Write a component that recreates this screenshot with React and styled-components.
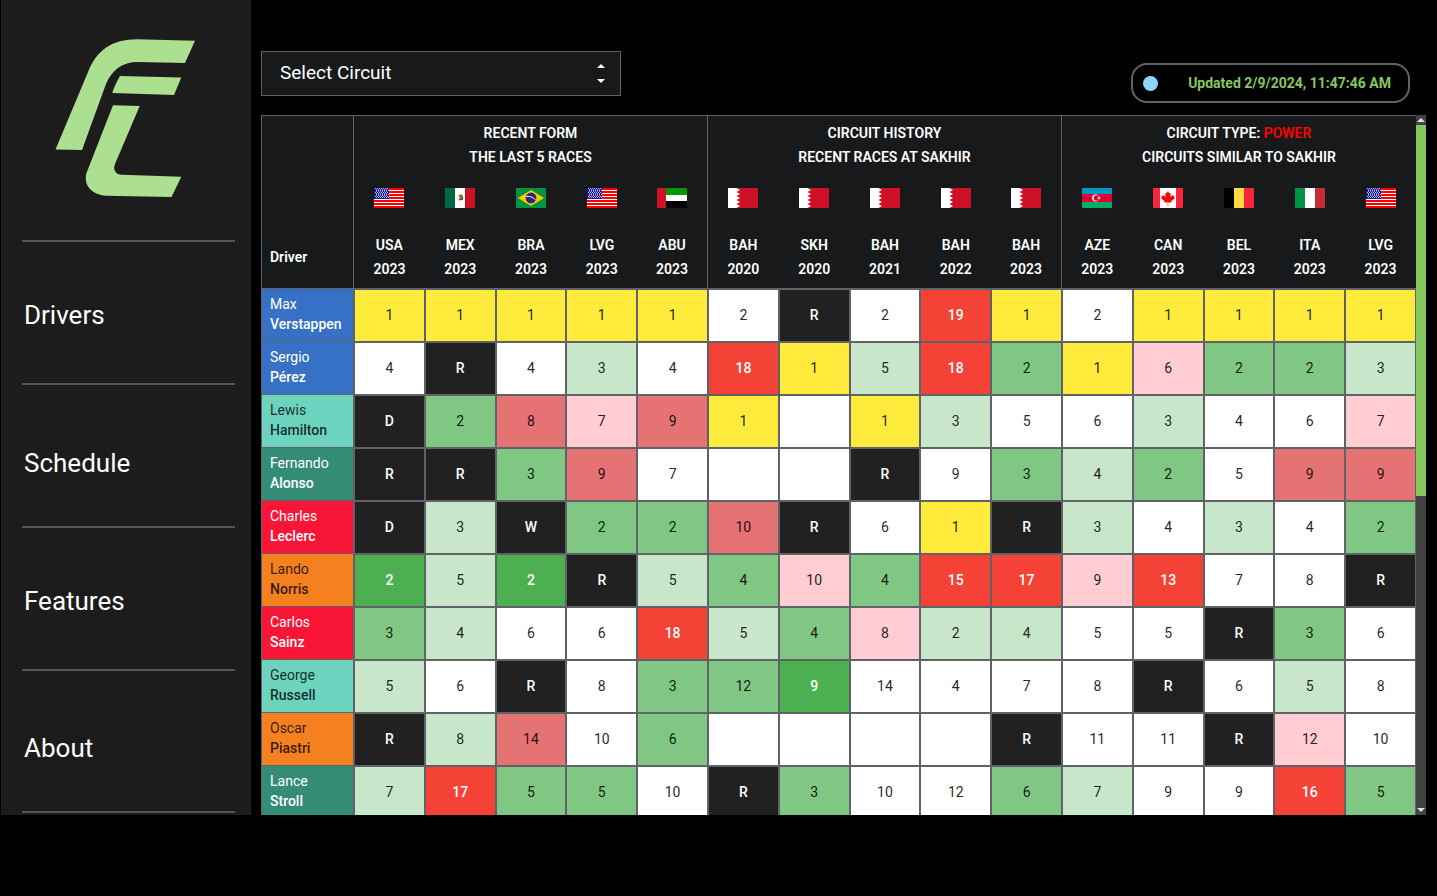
import React, { useRef, useState } from "react";
import styled, { createGlobalStyle } from "styled-components";

const color = {
  panel: "#1c1c1c",
  surface: "#17191a",
  line: "#5f6368",
  divider: "#555555",
  logo: "#acdf8f",
  accent: "#86c65f",
  track: "#424242",
};

const GlobalStyle = createGlobalStyle`
  * { box-sizing: border-box; }
  body {
    margin: 0;
    background: #000;
    color: #fff;
    font-family: Roboto, "Liberation Sans", sans-serif;
  }
  button, select { font-family: inherit; }
`;

const Page = styled.div`
  display: flex;
  height: 91vh;
  padding-left: 1px;
`;

const Sidebar = styled.aside`
  flex: 0 0 250px;
  display: flex;
  flex-direction: column;
  padding: 0 16px 2px 21px;
  background: ${color.panel};
`;

const LogoLink = styled.a`
  display: flex;
  flex: 0 0 242px;
  padding: 38px 0 0 32px;
  border-bottom: 2px solid ${color.divider};
`;

const Nav = styled.nav`
  display: grid;
  flex: 1;
  grid-template-rows: repeat(4, 1fr);
`;

const NavLink = styled.a`
  display: flex;
  align-items: center;
  padding: ${(p) => (p.$low ? "15px" : "5px")} 0 0 2px;
  border-bottom: 2px solid ${color.divider};
  color: #fff;
  font-size: 26px;
  line-height: 32px;
  text-decoration: none;
`;

const Main = styled.main`
  display: flex;
  flex: 1;
  flex-direction: column;
  min-width: 0;
  padding: 51px 11px 0 10px;
`;

const Toolbar = styled.header`
  display: flex;
  align-items: flex-start;
  justify-content: space-between;
  flex: 0 0 64px;
  padding-right: 16px;
`;

const SelectBox = styled.label`
  display: flex;
  align-items: center;
  width: 360px;
  height: 45px;
  padding: 0 14px 2px 0;
  border: 1px solid ${color.line};
  background: ${color.surface};
`;

const Select = styled.select`
  flex: 1;
  height: 41px;
  padding: 0 0 0 18px;
  border: 0;
  outline: 0;
  appearance: none;
  background: transparent;
  color: #fff;
  font-size: 19px;
`;

const Badge = styled.div`
  display: flex;
  align-items: center;
  justify-content: space-between;
  width: 279px;
  height: 40px;
  margin-top: 12px;
  padding: 0 17px 0 10px;
  border: 2px solid ${color.line};
  border-radius: 16px;
  color: ${color.accent};
  font-size: 14px;
  font-weight: 700;
  line-height: 20px;
`;

const Dot = styled.span`
  width: 15px;
  height: 15px;
  border-radius: 50%;
  background: #90d5ff;
`;

const Board = styled.section`
  display: flex;
  flex: 1;
  min-height: 0;
`;

const Viewport = styled.div`
  flex: 1;
  min-width: 0;
  overflow-y: auto;
  scrollbar-width: none;
`;

const Table = styled.table`
  width: 100%;
  table-layout: fixed;
  border-collapse: separate;
  border-spacing: 0;
  font-size: 14px;
`;

const DriverCol = styled.col`
  width: 93px;
`;

const HeadCell = styled.th`
  padding: 0;
  background: ${color.surface};
  font-weight: 600;
  line-height: 24px;
`;

const CornerCell = styled(HeadCell)`
  padding: 0 8px 19px;
  border: 1px solid ${color.line};
  text-align: left;
  vertical-align: bottom;
`;

const GroupCell = styled(HeadCell)`
  height: 60px;
  padding-top: 5px;
  border-top: 1px solid ${color.line};
  border-right: ${(p) => (p.$last ? 0 : 1)}px solid ${color.line};
  vertical-align: top;
`;

const RaceCell = styled(HeadCell)`
  height: 114px;
  padding-top: 13px;
  border-bottom: 1px solid ${color.line};
  border-right: ${(p) => (p.$edge ? 1 : 0)}px solid ${color.line};
  vertical-align: top;
`;

const RaceLabel = styled.div`
  margin-top: 25px;
`;

const FlagSvg = styled.svg`
  display: block;
  width: 30px;
  height: 20px;
  margin: 0 auto;
`;

const Power = styled.span`
  color: #f00;
`;

const teams = {
  redbull: ["#3671c6", "#fff"],
  mercedes: ["#6cd3bf", "rgba(0,0,0,.8)"],
  aston: ["#358c75", "#fff"],
  ferrari: ["#f91536", "#fff"],
  mclaren: ["#f58020", "rgba(0,0,0,.8)"],
};

const DriverCell = styled.th`
  height: 53px;
  padding: 0 8px 2px;
  border: solid ${color.line};
  border-width: 0 1px 1px;
  background: ${(p) => teams[p.$team][0]};
  color: ${(p) => teams[p.$team][1]};
  font-weight: 400;
  line-height: 20px;
  text-align: left;
`;

const LastName = styled.div`
  font-weight: 500;
`;

const tones = {
  y: "#ffeb3b",
  w: "#ffffff",
  k: "#212121",
  r: "#f44336",
  s: "#e57373",
  p: "#ffcdd2",
  l: "#c8e6c9",
  g: "#81c784",
  G: "#4caf50",
};

const ResultCell = styled.td`
  height: 53px;
  padding: 0 0 2px;
  border: 1px solid ${color.line};
  background: ${(p) => tones[p.$tone]};
  color: ${(p) => ("krG".includes(p.$tone) ? "#fff" : "rgba(0,0,0,.87)")};
  font-weight: ${(p) => ("krG".includes(p.$tone) ? 500 : 400)};
  line-height: 20px;
  text-align: center;
`;

const Scrollbar = styled.div`
  display: flex;
  flex: 0 0 10px;
  flex-direction: column;
  background: ${color.track};
`;

const Track = styled.div`
  flex: 1;
`;

const Thumb = styled.div`
  height: 54.5%;
  background: ${color.accent};
`;

const ArrowButton = styled.button`
  display: flex;
  align-items: center;
  justify-content: center;
  height: 10px;
  padding: 0;
  border: 0;
  background: transparent;
`;

const stripes = [1, 3, 5, 7, 9, 11];

const flagArt = {
  us: (
    <>
      <path fill="#fff" d="M0 0h30v20H0z" />
      {[0, 3, 6, 9, 12, 15, 18].map((y) => (
        <path key={y} fill="#f00" d={`M0 ${y}h30v2H0z`} />
      ))}
      <path fill="#1a1a8c" d="M0 0h15v11H0z" />
      {stripes.map((y, row) => (
        <path key={y} stroke="#b8b8e8" strokeDasharray="1 1" d={`M${1 + (row % 2)} ${y - 0.5 + (row > 4 ? -1 : 0)}h13`} />
      ))}
      {[2, 4, 6, 8].map((y) => (
        <path key={y} stroke="#8a8ad0" strokeDasharray="1 1" d={`M2 ${y - 0.5}h12`} />
      ))}
    </>
  ),
  mx: (
    <>
      <path fill="#006847" d="M0 0h10v20H0z" />
      <path fill="#fff" d="M10 0h10v20H10z" />
      <path fill="#ce1126" d="M20 0h10v20H20z" />
      <path fill="none" stroke="#b9c9ab" strokeWidth=".8" d="M12 9c0 5 5.500 5 6.500 0" />
      <path fill="#8c6239" d="M13 8l3-2 2 2v3l-2 1-2-1 1-2z" />
      <path fill="#4d5a45" d="M14 11h4v1h-4z" />
    </>
  ),
  br: (
    <>
      <path fill="#009440" d="M0 0h30v20H0z" />
      <path fill="#ffcb00" d="M15 2l13 8-13 8L2 10z" />
      <circle cx="15" cy="10" r="5.4" fill="#302681" />
      <path fill="none" stroke="#fff" strokeWidth=".9" d="M10 8.500c4-.6 7 .6 9.800 3.600" />
    </>
  ),
  ae: (
    <>
      <path fill="#009a00" d="M0 0h30v7H0z" />
      <path fill="#fff" d="M0 7h30v6H0z" />
      <path fill="#000" d="M0 13h30v7H0z" />
      <path fill="#ce1126" d="M0 0h9v20H0z" />
    </>
  ),
  bh: (
    <>
      <path fill="#ce1126" d="M0 0h30v20H0z" />
      <path fill="#fff" d="M0 0h8.500l3.500 2-3.500 2 3.500 2-3.500 2 3.500 2-3.500 2 3.500 2-3.500 2 3.500 2-3.500 2H0z" />
    </>
  ),
  az: (
    <>
      <path fill="#0098c3" d="M0 0h30v6H0z" />
      <path fill="#e00034" d="M0 6h30v8H0z" />
      <path fill="#00ae65" d="M0 14h30v6H0z" />
      <circle cx="13.500" cy="10" r="3.400" fill="#fff" />
      <circle cx="14.500" cy="10" r="2.700" fill="#e00034" />
      <path fill="#fff" d="M17 8l.6 1.400L19 10l-1.400.6L17 12l-.6-1.400L15 10l1.400-.6z" />
    </>
  ),
  ca: (
    <>
      <path fill="#fff" d="M0 0h30v20H0z" />
      <path fill="#f7263a" d="M0 0h7v20H0zM23 0h7v20h-7z" />
      <path fill="#f00" d="M15 3l1.500 2.600 1.300-.7-.5 4 2-2 .4 1.100 2-.3-.7 2 .9.5-3.900 3.300.4 1.200-3.200-.5V18h-.5v-3.800l-3.200.5.4-1.200L8 10.200l.9-.5-.7-2 2 .3.500-1.100 1.900 2-.5-4 1.300.7z" />
    </>
  ),
  be: (
    <>
      <path fill="#000" d="M0 0h10v20H0z" />
      <path fill="#fdda44" d="M10 0h10v20H10z" />
      <path fill="#f7263a" d="M20 0h10v20H20z" />
    </>
  ),
  it: (
    <>
      <path fill="#009246" d="M0 0h10v20H0z" />
      <path fill="#fff" d="M10 0h10v20H10z" />
      <path fill="#c42b37" d="M20 0h10v20H20z" />
    </>
  ),
};

const groups = [
  { title: "RECENT FORM", sub: "THE LAST 5 RACES" },
  { title: "CIRCUIT HISTORY", sub: "RECENT RACES AT SAKHIR" },
  { title: "CIRCUIT TYPE: ", power: "POWER", sub: "CIRCUITS SIMILAR TO SAKHIR" },
];

const races = [
  ["us", "USA", 2023], ["mx", "MEX", 2023], ["br", "BRA", 2023], ["us", "LVG", 2023], ["ae", "ABU", 2023],
  ["bh", "BAH", 2020], ["bh", "SKH", 2020], ["bh", "BAH", 2021], ["bh", "BAH", 2022], ["bh", "BAH", 2023],
  ["az", "AZE", 2023], ["ca", "CAN", 2023], ["be", "BEL", 2023], ["it", "ITA", 2023], ["us", "LVG", 2023],
];

// Each result is a tone key followed by the finishing position or status.
const drivers = [
  ["Max", "Verstappen", "redbull", "y1 y1 y1 y1 y1 w2 kR w2 r19 y1 w2 y1 y1 y1 y1"],
  ["Sergio", "Pérez", "redbull", "w4 kR w4 l3 w4 r18 y1 l5 r18 g2 y1 p6 g2 g2 l3"],
  ["Lewis", "Hamilton", "mercedes", "kD g2 s8 p7 s9 y1 w y1 l3 w5 w6 l3 w4 w6 p7"],
  ["Fernando", "Alonso", "aston", "kR kR g3 s9 w7 w w kR w9 g3 l4 g2 w5 s9 s9"],
  ["Charles", "Leclerc", "ferrari", "kD l3 kW g2 g2 s10 kR w6 y1 kR l3 w4 l3 w4 g2"],
  ["Lando", "Norris", "mclaren", "G2 l5 G2 kR l5 g4 p10 g4 r15 r17 p9 r13 w7 w8 kR"],
  ["Carlos", "Sainz", "ferrari", "g3 l4 w6 w6 r18 l5 g4 p8 l2 l4 w5 w5 kR g3 w6"],
  ["George", "Russell", "mercedes", "l5 w6 kR w8 g3 g12 G9 w14 w4 w7 w8 kR w6 l5 w8"],
  ["Oscar", "Piastri", "mclaren", "kR l8 s14 w10 g6 w w w w kR w11 w11 kR p12 w10"],
  ["Lance", "Stroll", "aston", "l7 r17 g5 g5 w10 kR g3 w10 w12 g6 l7 w9 w9 r16 g5"],
];

const Logo = () => (
  <svg width="142" height="162" viewBox="54 38 142 162" fill={color.logo} role="img" aria-label="Home">
    <path d="M55.500 149.500L88 72C97 50 112 39.300 137 39.300L195 40.700L185 63L138 62C122 62 112 70 106 84L82 150Z" />
    <path d="M120 76L181.300 77.500L174 95L112.300 93C114 87 117 81 120 76Z" />
    <path d="M113 105.300L139.700 106L115 164C112.500 170 116 174.700 122 174.800L181.300 176.700L171.500 197L106 195.700C92 195 83 185 86.500 173Z" />
  </svg>
);

const Arrow = ({ down }) => (
  <svg width="8" height="4" viewBox="0 0 8 4" fill="#e0e0e0">
    <path d={down ? "M0 0h8L4 4z" : "M0 4h8L4 0z"} />
  </svg>
);

export default function App() {
  const view = useRef(null);
  const [top, setTop] = useState(0);
  const scroll = (amount) => view.current.scrollBy({ top: amount });

  return (
    <>
      <GlobalStyle />
      <Page>
        <Sidebar>
          <LogoLink href="#home"><Logo /></LogoLink>
          <Nav>
            <NavLink href="#drivers">Drivers</NavLink>
            <NavLink href="#schedule" $low>Schedule</NavLink>
            <NavLink href="#features">Features</NavLink>
            <NavLink href="#about" $low>About</NavLink>
          </Nav>
        </Sidebar>
        <Main>
          <Toolbar>
            <SelectBox>
              <Select aria-label="Circuit" defaultValue="">
                <option value="">Select Circuit</option>
              </Select>
              <svg width="10" height="20" viewBox="0 0 10 20" fill="#fff">
                <path d="M1 5L5 1l4 4zM1 16h8l-4 4z" />
              </svg>
            </SelectBox>
            <Badge>
              <Dot />
              <span>Updated 2/9/2024, 11:47:46 AM</span>
            </Badge>
          </Toolbar>
          <Board>
            <Viewport ref={view} onScroll={(e) => setTop(e.currentTarget.scrollTop)}>
              <Table>
                <colgroup>
                  <DriverCol />
                  {races.map((_, i) => <col key={i} />)}
                </colgroup>
                <thead>
                  <tr>
                    <CornerCell scope="col" rowSpan={2}>Driver</CornerCell>
                    {groups.map((g, i) => (
                      <GroupCell key={g.sub} scope="colgroup" colSpan={5} $last={i === 2}>
                        <div>{g.title}{g.power && <Power>{g.power}</Power>}</div>
                        <div>{g.sub}</div>
                      </GroupCell>
                    ))}
                  </tr>
                  <tr>
                    {races.map(([flag, code, year], i) => (
                      <RaceCell key={i} scope="col" $edge={i === 4 || i === 9}>
                        <FlagSvg viewBox="0 0 30 20" aria-hidden="true">{flagArt[flag]}</FlagSvg>
                        <RaceLabel>{code}<br />{year}</RaceLabel>
                      </RaceCell>
                    ))}
                  </tr>
                </thead>
                <tbody>
                  {drivers.map(([first, last, team, results]) => (
                    <tr key={last}>
                      <DriverCell scope="row" $team={team}>
                        <div>{first}</div>
                        <LastName>{last}</LastName>
                      </DriverCell>
                      {results.split(" ").map((r, i) => (
                        <ResultCell key={i} $tone={r[0]}>{r.slice(1)}</ResultCell>
                      ))}
                    </tr>
                  ))}
                </tbody>
              </Table>
            </Viewport>
            <Scrollbar>
              <ArrowButton aria-label="Scroll up" onClick={() => scroll(-53)}><Arrow /></ArrowButton>
              <Track>
                <Thumb style={{ marginTop: top }} />
              </Track>
              <ArrowButton aria-label="Scroll down" onClick={() => scroll(53)}><Arrow down /></ArrowButton>
            </Scrollbar>
          </Board>
        </Main>
      </Page>
    </>
  );
}
